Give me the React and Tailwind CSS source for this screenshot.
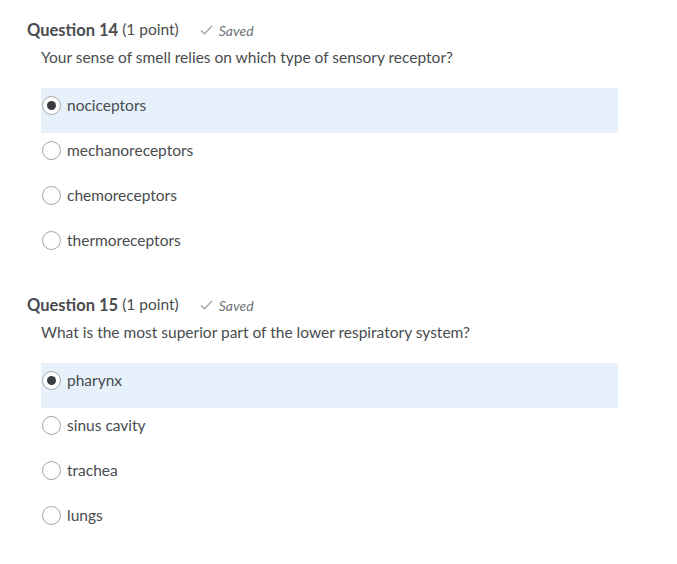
import React from "react";

const questions = [
  {
    num: 14,
    text: "Your sense of smell relies on which type of sensory receptor?",
    options: ["nociceptors", "mechanoreceptors", "chemoreceptors", "thermoreceptors"],
    selected: 0,
  },
  {
    num: 15,
    text: "What is the most superior part of the lower respiratory system?",
    options: ["pharynx", "sinus cavity", "trachea", "lungs"],
    selected: 0,
  },
];

function Radio({ checked }) {
  return (
    <span className="flex h-[19px] w-[19px] shrink-0 items-center justify-center rounded-full border border-[#a3a6a9] bg-white">
      {checked && <span className="h-[9px] w-[9px] rounded-full bg-[#3a3d40]" />}
    </span>
  );
}

function Question({ q, first }) {
  return (
    <div className={first ? "" : "mt-[27px]"}>
      <div className="flex h-[20px] items-center pl-[27px]">
        <span className="text-[16.5px] font-bold text-[#494c4e]">Question {q.num}</span>
        <span className="ml-[4px] text-[15.5px] text-[#494c4e]">(1 point)</span>
        <span className="ml-[21px] flex items-center gap-[6px] text-[14px] italic text-[#6e7376]">
          <svg width="13" height="10" viewBox="0 0 13 10" fill="none">
            <path d="M1 5.5 L4.5 8.8 L12 1" stroke="#a3a6a9" strokeWidth="1.3" />
          </svg>
          Saved
        </span>
      </div>
      <div className="mt-[8px] flex h-[20px] items-center pl-[41px] text-[15.5px] text-[#494c4e]">
        {q.text}
      </div>
      <div className="mt-[20px] pl-[41px]">
        {q.options.map((o, i) => (
          <div
            key={o}
            className={
              "flex h-[45px] w-[577px] items-start gap-[6px] pl-[1px] pt-[8px] " +
              (i === q.selected ? "bg-[#e6f1fb]" : "")
            }
          >
            <Radio checked={i === q.selected} />
            <span className="text-[15.5px] leading-[19px] text-[#494c4e]">{o}</span>
          </div>
        ))}
      </div>
    </div>
  );
}

export default function App() {
  return (
    <div
      className="min-h-[564px] w-[677px] bg-white pt-[20px]"
      style={{ fontFamily: "Lato, 'Noto Sans', sans-serif" }}
    >
      {questions.map((q, i) => (
        <Question key={q.num} q={q} first={i === 0} />
      ))}
    </div>
  );
}
